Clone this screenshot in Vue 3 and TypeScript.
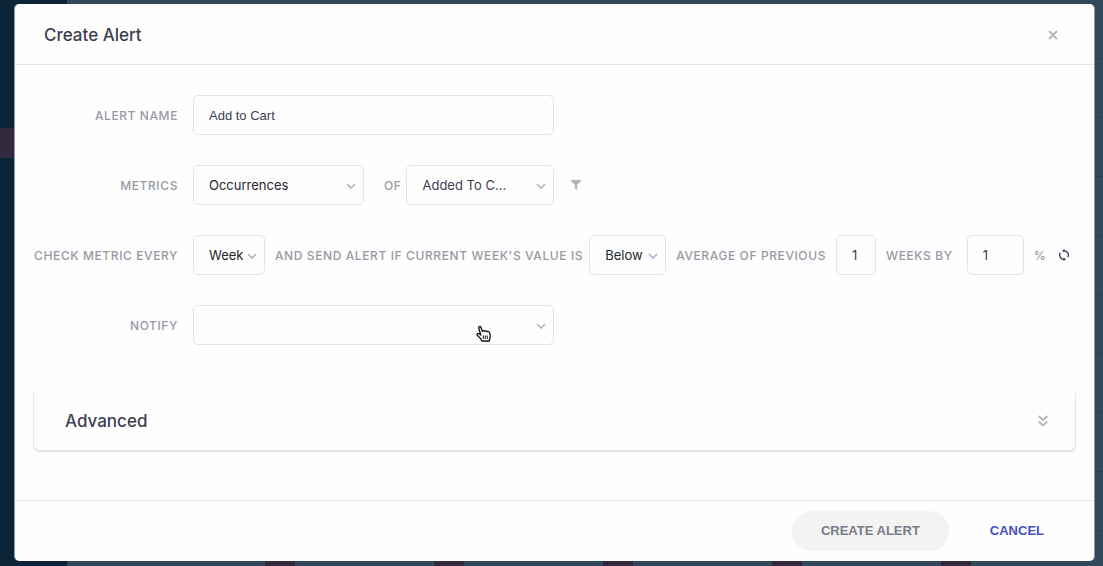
<script setup lang="ts">
import { ref } from 'vue'

const alertName = ref('Add to Cart')
const metric = ref('Occurrences')
const event = ref('Added To C...')
const period = ref('Week')
const direction = ref('Below')
const periods = ref('1')
const percent = ref('1')
const notify = ref('')
</script>

<template>
  <div class="screen">
    <div class="rail"><span class="rail-active"></span></div>
    <div class="board"></div>
    <section class="modal" role="dialog" aria-labelledby="dialog-title">
      <header class="header">
        <h1 id="dialog-title">Create Alert</h1>
        <button class="icon-button" type="button" aria-label="Close">
          <svg width="12" height="12" viewBox="0 0 12 12"><path d="M2 2l8 8M10 2l-8 8" fill="none" stroke="#b5b6bd" stroke-width="2" /></svg>
        </button>
      </header>

      <form class="body" @submit.prevent>
        <div class="row">
          <label class="lead" for="alert-name">ALERT NAME</label>
          <input id="alert-name" v-model="alertName" class="field wide name" type="text" />
        </div>

        <div class="row">
          <label class="lead" for="metric">METRICS</label>
          <div class="picker metric">
            <select id="metric" v-model="metric" class="field"><option>Occurrences</option></select>
            <svg class="chevron" width="10" height="6" viewBox="0 0 10 6"><path d="M1 1l4 4 4-4" /></svg>
          </div>
          <label class="of" for="event">OF</label>
          <div class="picker event">
            <select id="event" v-model="event" class="field slate"><option>Added To C...</option></select>
            <svg class="chevron" width="10" height="6" viewBox="0 0 10 6"><path d="M1 1l4 4 4-4" /></svg>
          </div>
          <button class="icon-button filter" type="button" aria-label="Filter">
            <svg width="10" height="10" viewBox="0 0 10 10"><path d="M0 0h10v1.2L6.2 4.6V10L3.8 8.6V4.6L0 1.2z" fill="#b1b2ba" /></svg>
          </button>
        </div>

        <div class="row">
          <label class="lead" for="period">CHECK METRIC EVERY</label>
          <div class="picker period">
            <select id="period" v-model="period" class="field"><option>Week</option></select>
            <svg class="chevron" width="10" height="6" viewBox="0 0 10 6"><path d="M1 1l4 4 4-4" /></svg>
          </div>
          <label class="condition" for="direction">AND SEND ALERT IF CURRENT WEEK'S VALUE IS</label>
          <div class="picker direction">
            <select id="direction" v-model="direction" class="field"><option>Below</option></select>
            <svg class="chevron" width="10" height="6" viewBox="0 0 10 6"><path d="M1 1l4 4 4-4" /></svg>
          </div>
          <label class="average" for="periods">AVERAGE OF PREVIOUS</label>
          <input id="periods" v-model="periods" class="field count" type="text" />
          <label class="by" for="percent">WEEKS BY</label>
          <input id="percent" v-model="percent" class="field percent" type="text" />
          <span class="unit">%</span>
          <button class="icon-button" type="button" aria-label="Refresh">
            <svg width="12" height="12" viewBox="0 0 12 12">
              <path d="M6 1.7A4.3 4.3 0 0 1 9.7 8.200M6 10.300A4.300 4.300 0 0 1 2.300 3.800" fill="none" stroke="#35374b" stroke-width="1.300" />
              <path d="M6.500 0v3.600L4 1.800zM5.500 8.400V12L8 10.200z" fill="#35374b" />
            </svg>
          </button>
        </div>

        <div class="row">
          <label class="lead" for="notify">NOTIFY</label>
          <div class="picker wide">
            <select id="notify" v-model="notify" class="field"><option value=""></option></select>
            <svg class="chevron" width="10" height="6" viewBox="0 0 10 6"><path d="M1 1l4 4 4-4" /></svg>
            <svg class="pointer" width="16" height="18" viewBox="0 0 16 18">
              <path d="M5.800 16L4.600 13.600 1.300 10.200C.6 9 1.700 7.800 3 8.700L4.800 10 2.800 3.300C2.300 1.500 4.300.8 5 2.500l1.500 4c.2-1.200 1.900-1.300 2.400 0 .5-1 2-.9 2.400.3.7-.8 2-.3 2.200.8.900 2.300 1 4.300.3 6l-.5 2.400z" fill="#fff" stroke="#111" stroke-width="1.300" stroke-linejoin="round" />
              <path d="M7.300 10.500v3.500M9.300 10.500v3.500M11.300 10.500v3.500" stroke="#111" stroke-width="1" />
            </svg>
          </div>
        </div>

        <button class="advanced" type="button">
          <span>Advanced</span>
          <svg width="10" height="12" viewBox="0 0 10 12"><path d="M.7 1L5 5l4.300-4M.7 6.500l4.300 4 4.300-4" fill="none" stroke="#b5b6bd" stroke-width="1.800" /></svg>
        </button>
      </form>

      <footer class="footer">
        <button class="create" type="button">CREATE ALERT</button>
        <button class="cancel" type="button">CANCEL</button>
      </footer>
    </section>
  </div>
</template>

<style>
body {
  margin: 0;
  background: #32485b;
}
</style>

<style scoped>
* {
  box-sizing: border-box;
}

.screen {
  position: relative;
  min-height: 100vh;
  padding: 4px 8px 5px 14px;
  display: flex;
  background: repeating-linear-gradient(#32485b 0 58px, #2c4053 58px 59px);
  font-family: Inter, "Liberation Sans", sans-serif;
}

.rail {
  position: absolute;
  inset: 0 auto 0 0;
  width: 67px;
  background: #0d2438;
}

.rail-active {
  display: block;
  height: 30px;
  margin-top: 128px;
  background: #33293f;
}

.board {
  position: absolute;
  inset: auto 100px 0 265px;
  height: 5px;
  background: repeating-linear-gradient(90deg, #33293f 0 30px, transparent 30px 169px);
}

.modal {
  position: relative;
  flex: 1;
  min-width: 0;
  display: flex;
  flex-direction: column;
  background: #fefefe;
  border-left: 1px solid #8b99a4;
  border-right: 1px solid #8b99a4;
  border-radius: 5px;
}

.header {
  display: flex;
  align-items: center;
  justify-content: space-between;
  height: 61px;
  padding: 2px 35px 0 29px;
  border-bottom: 1px solid #e4e4e7;
}

h1 {
  margin: 0;
  font-size: 17px;
  font-weight: 500;
  line-height: 24px;
  color: #3d3f51;
}

button {
  border: 0;
  background: none;
  padding: 0;
  font: inherit;
}

svg {
  display: block;
}

.body {
  flex: 1;
  display: flex;
  flex-direction: column;
  gap: 30px;
  padding: 30px 19px 48px;
}

.row {
  display: flex;
  align-items: center;
  height: 40px;
}

label,
.unit {
  flex: none;
  padding-top: 2px;
  font-size: 12px;
  font-weight: 500;
  line-height: 16px;
  letter-spacing: 0.05em;
  white-space: nowrap;
  color: #9899a4;
}

.lead {
  width: 144px;
  margin-right: 15px;
  text-align: right;
}

.picker {
  position: relative;
  flex: none;
}

.field {
  display: block;
  width: 100%;
  height: 40px;
  margin: 0;
  padding: 0 15px;
  appearance: none;
  border: 1px solid #e4e4e8;
  border-radius: 5px;
  background: #fefefe;
  font-family: Inter, "Liberation Sans", sans-serif;
  font-size: 13px;
  color: #26262c;
  outline: none;
}

.field.name {
  font-family: "Liberation Sans", Arial, sans-serif;
  color: #3d3f51;
}

.field.slate,
.field.count,
.field.percent {
  color: #3d3f51;
}

.wide {
  width: 361px;
}

.metric {
  width: 171px;
}

.event {
  width: 148px;
}

.period {
  width: 72px;
}

.direction {
  width: 77px;
}

.field.count {
  flex: none;
  width: 40px;
}

.field.percent {
  flex: none;
  width: 57px;
}

.chevron {
  position: absolute;
  right: 8px;
  top: 18px;
  fill: none;
  stroke: #b5b6bd;
  stroke-width: 1.7;
  pointer-events: none;
}

.pointer {
  position: absolute;
  right: 62px;
  top: 20px;
  pointer-events: none;
}

.of {
  margin: 0 5px 0 20px;
}

.filter {
  margin-left: 17px;
}

.condition {
  margin: 0 6px 0 10px;
}

.average,
.by {
  margin: 0 10px;
}

.by {
  margin-right: 14px;
}

.unit {
  margin: 0 12px 0 10px;
}

.advanced {
  display: flex;
  align-items: center;
  justify-content: space-between;
  height: 61px;
  margin-top: 14px;
  padding: 2px 27px 0 31px;
  border-radius: 5px;
  background: #fefefe;
  box-shadow: 0 1px 1px 1px #e4e4e6;
  font-size: 17px;
  font-weight: 500;
  line-height: 24px;
  color: #3d3f51;
}

.footer {
  display: flex;
  align-items: center;
  justify-content: flex-end;
  height: 61px;
  padding-right: 21px;
  border-top: 1px solid #e6e6e8;
  font-family: "Liberation Sans", Arial, sans-serif;
  font-size: 13px;
  font-weight: 700;
}

.create,
.cancel {
  height: 40px;
  padding: 0 29px 2px;
}

.create {
  border-radius: 20px;
  background: #f3f3f3;
  color: #7b7c87;
}

.cancel {
  margin-left: 12px;
  color: #4650c2;
}
</style>
